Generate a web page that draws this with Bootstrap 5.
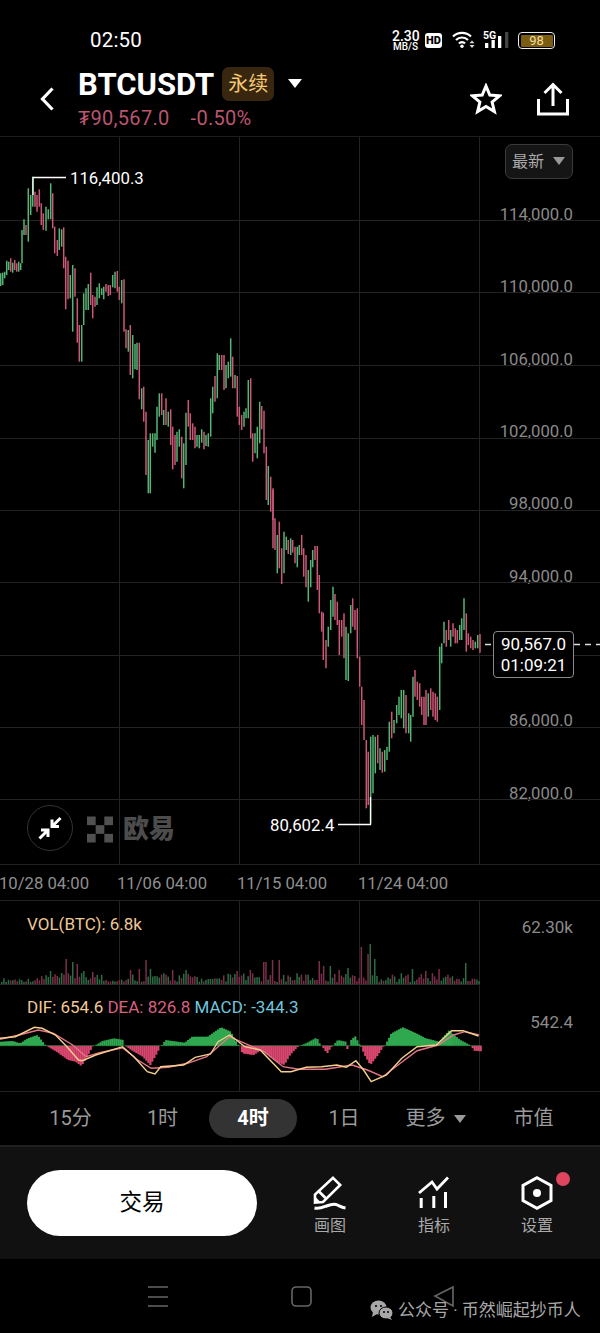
<!doctype html>
<html lang="zh">
<head>
<meta charset="utf-8">
<title>BTCUSDT</title>
<link href="https://cdn.jsdelivr.net/npm/bootstrap@5.3.0/dist/css/bootstrap.min.css" rel="stylesheet">
<style>
html,body{background:#000;margin:0}
body{width:600px;height:1333px;overflow:hidden;font-family:Roboto,"Noto Sans CJK SC",sans-serif;color:#fff}
svg{display:block}
.stbar{height:62px;padding:21px 45px 0 90px}
.st-time{font-size:20.500px;line-height:38px;height:38px;letter-spacing:.2px}
.st-speed{width:27px;margin:9px 6px 0 0;text-align:center;font-size:10px;line-height:9px;font-weight:500;white-space:nowrap}
.st-speed b{font-size:14px;font-weight:500;display:block;line-height:12px}
.st-hd{width:17px;height:15px;background:#fff;color:#000;border-radius:3px;font-size:11px;font-weight:900;line-height:15px;text-align:center;margin:12px 10px 0 0}
.st-wifi{margin-top:9px}
.st-sig{margin:9px 0 0 8px}
.st-batt{width:37px;height:17px;border:1.500px solid #eee;border-radius:4px;padding:1.500px;margin:11px 0 0 9px}
.st-batt span{display:block;height:100%;background:#7a5c12;border-radius:1px;font-size:13px;line-height:11px;color:#f2dc9e;text-align:center}
.hdr{height:75px;border-bottom:1px solid #1c1c1c;padding:0 31px 0 40px}
.hdr-title{margin:0 0 2px 24px}
.ticker{font-size:31px;font-weight:700;line-height:34px;padding-top:1px}
.perp{width:52px;height:34px;margin-left:8px;background:#38270e;color:#f6c878;border-radius:7px;font-size:20px;line-height:34px;text-align:center}
.caret-w{width:0;height:0;border-left:7px solid transparent;border-right:7px solid transparent;border-top:9px solid #fff;margin:12px 0 0 14px}
.subline{font-size:20px;line-height:22px;margin-top:5px;color:#bb5570;letter-spacing:.3px;gap:21px}
.chartbox{position:relative;height:728px;border-bottom:1px solid #222;overflow:hidden}
#csvg,#psvg{position:absolute;left:0;top:0}
.yl{position:absolute;right:27px;font-size:16.700px;line-height:18px;color:#8a8a8a;transform:translateY(-50%)}
.ext{position:absolute;font-size:16.800px;line-height:18px;color:#fff;transform:translateY(-50%)}
.latest{position:absolute;left:505px;top:7px;width:68px;height:35px;background:#151515;border:1px solid #3a3a3a;border-radius:7px;font-size:16px;line-height:33px;color:#aaa;padding-left:6px}
.latest i{position:absolute;left:47px;top:12px;border-left:6px solid transparent;border-right:6px solid transparent;border-top:8px solid #999}
.pricetag{position:absolute;left:493px;top:494px;width:81px;height:47px;background:#000;border:1px solid #8a8a8a;border-radius:4px;font-size:17px;line-height:21px;text-align:center;padding-top:2px}
.collapse-btn{position:absolute;left:27px;top:668px;width:46px;height:46px;border:1px solid #333;border-radius:50%;display:flex;align-items:center;justify-content:center}
.brand{position:absolute;left:87px;top:678px;gap:10px}
.brand span{font-size:26px;font-weight:900;line-height:28px;color:#4c4c4c}
.xaxis{height:36px;border-bottom:1px solid #222;position:relative}
.xl{position:absolute;top:10px;width:120px;text-align:center;font-size:16.700px;line-height:18px;color:#8f8f8f;white-space:nowrap}
.panels{position:relative;height:191px;border-bottom:1px solid #222}
.pl{position:absolute;font-size:17px;line-height:18px;white-space:nowrap;transform:translateY(-50%)}
.tabsbar{height:55px;border-bottom:2px solid #1f1f1f;padding-left:25px;font-size:20px;color:#9a9a9a;align-items:center}
.tabsbar>div{text-align:center;line-height:39px;height:39px}
.tb1{width:91px}
.tb2{width:93px}
.tb-on{width:88px;background:#333;border-radius:20px;color:#fff;font-weight:700}
.tb4{width:94px}
.tb5{width:89px;white-space:nowrap}
.tb6{width:107px}
.tb5 i{display:inline-block;margin-left:8px;vertical-align:2px;border-left:6px solid transparent;border-right:6px solid transparent;border-top:8px solid #999}
.toolbar{height:112px;background:#111;padding-left:27px}
.trade{width:230px;height:66px;margin:23px 21px 0 0;border-radius:33px;background:#fff;color:#000;font-size:22.500px;border:0}
.tool{width:104px;position:relative;font-size:16px;line-height:18px;color:#aaa;text-align:center;padding-top:29px}
.tool svg{margin:0 auto 7px}
.tool-last{margin-left:-1px}
.reddot{position:absolute;left:71px;top:25px;width:14px;height:14px;background:#e0455f;border-radius:50%}
.navbox{height:74px;position:relative}
.wm{position:absolute;left:370px;top:38px;font-size:17px;line-height:26px;color:#a8a8a8;gap:5px;white-space:nowrap}
</style>
</head>
<body>
<div class="stbar d-flex justify-content-between">
  <div class="st-time">02:50</div>
  <div class="d-flex align-items-start">
    <div class="st-speed"><b>2.30</b>MB/S</div>
    <div class="st-hd">HD</div>
    <svg class="st-wifi" width="23" height="18" viewBox="0 0 23 18" fill="none" stroke="#fff" stroke-width="2.200"><path d="M1 6.500a13 13 0 0 1 18 0M4 10a8.500 8.500 0 0 1 12 0M7 13.500a4 4 0 0 1 6 0"/><circle cx="10" cy="16.300" r="1.700" fill="#fff" stroke="none"/><path d="M20 10.500l2.500 2.800h-5zM20 18l2.500-3h-5z" fill="#ddd" stroke="none"/></svg>
    <svg class="st-sig" width="26" height="18" viewBox="0 0 26 18" fill="#fff"><text x="0" y="8.500" font-size="10.500" font-weight="700" font-family="Roboto">5G</text><rect x="2" y="13" width="3.300" height="5"/><rect x="8.500" y="10" width="3.300" height="8"/><rect x="15" y="6" width="3.300" height="12"/><rect x="22" y="2" width="3.300" height="16" fill="#444"/></svg>
    <div class="st-batt"><span>98</span></div>
  </div>
</div>

<div class="hdr d-flex align-items-center">
  <svg width="14" height="24" viewBox="0 0 14 24" fill="none" stroke="#fff" stroke-width="3.200"><path d="M12.500 1.500L2.500 12l10 10.500"/></svg>
  <div class="hdr-title flex-grow-1">
    <div class="d-flex align-items-start">
      <div class="ticker">BTCUSDT</div>
      <div class="perp">永续</div>
      <div class="caret-w"></div>
    </div>
    <div class="subline d-flex"><span>₮90,567.0</span><span>-0.50%</span></div>
  </div>
  <svg width="32" height="32" viewBox="0 0 32 32" fill="none" stroke="#fff" stroke-width="3" stroke-linejoin="miter"><path d="M16 3l3.800 9.100 9.700.700-7.400 6.300 2.300 9.500L16 23.400l-8.400 5.200 2.300-9.500-7.400-6.300 9.700-.700z"/></svg>
  <svg width="32" height="34" viewBox="0 0 32 34" fill="none" stroke="#fff" stroke-width="3" style="margin-left:35px"><path d="M16 24V3M7.500 11L16 2.500 24.500 11M1.500 17v15h29V17"/></svg>
</div>

<div class="chartbox" id="chart">
  <svg id="csvg" width="600" height="728"></svg>
  <div class="latest">最新<i></i></div>
  <div class="ext" style="left:70px;top:41px">116,400.3</div>
  <div class="ext" style="left:270px;top:688px">80,602.4</div>
  <div class="pricetag">90,567.0<br>01:09:21</div>
  <div class="collapse-btn"><svg width="26" height="26" viewBox="0 0 26 26" fill="none" stroke="#fff" stroke-width="3"><path d="M23.500 3L15 11.500M15 4.500V11.500h7M2.500 23.500L11 15M4 15H11v7"/></svg></div>
  <div class="brand d-flex align-items-center">
    <svg width="26" height="27" viewBox="0 0 27 27" fill="#505050"><rect width="9" height="9"/><rect x="18" width="9" height="9"/><rect x="9" y="9" width="9" height="9"/><rect y="18" width="9" height="9"/><rect x="18" y="18" width="9" height="9"/></svg>
    <span>欧易</span>
  </div>
</div>

<div class="xaxis">
  <div class="xl" style="left:-16px">10/28 04:00</div>
  <div class="xl" style="left:102px">11/06 04:00</div>
  <div class="xl" style="left:222px">11/15 04:00</div>
  <div class="xl" style="left:343px">11/24 04:00</div>
</div>

<div class="panels" id="pan">
  <svg id="psvg" width="600" height="191"></svg>
  <div class="pl" style="left:27px;top:23px;color:#f0c896">VOL(BTC): 6.8k</div>
  <div class="pl" style="right:27px;top:26px;color:#8a8a8a">62.30k</div>
  <div class="pl" style="left:27px;top:106px"><span style="color:#f0c896">DIF: 654.6</span> <span style="color:#d9607f">DEA: 826.8</span> <span style="color:#70c6dc">MACD: -344.3</span></div>
  <div class="pl" style="right:27px;top:121px;color:#8a8a8a">542.4</div>
</div>

<div class="tabsbar d-flex">
  <div class="tb1">15分</div>
  <div class="tb2">1时</div>
  <div class="tb-on">4时</div>
  <div class="tb4">1日</div>
  <div class="tb5">更多<i></i></div>
  <div class="tb6">市值</div>
</div>

<div class="toolbar d-flex align-items-start">
  <button class="trade" type="button">交易</button>
  <div class="tool">
    <svg width="34" height="34" viewBox="0 0 34 34" fill="none" stroke="#fff" stroke-width="2.600"><path d="M20 1.800l7.200 7.200L10 26l-8 .5V18.500z"/><path d="M5 14.500l7.500 7.500"/><path d="M2 26.500v-6l6 6z" fill="#fff" stroke="none"/><path d="M1.500 32c5 1 8-.5 12-2s8-2.500 11-1 4 2.500 8 3" stroke-width="3"/></svg>
    画图
  </div>
  <div class="tool">
    <svg width="32" height="34" viewBox="0 0 32 34" fill="none" stroke="#fff" stroke-width="2.800"><path d="M1 17L14 6l5 7L30 1.500"/><path d="M3.200 22v10M15.800 20v12M27.500 16v16" stroke-width="3"/></svg>
    指标
  </div>
  <div class="tool tool-last">
    <svg width="32" height="34" viewBox="0 0 32 34" fill="none" stroke="#fff" stroke-width="3"><path d="M16 1.700L30 9.500v15L16 32.300 2 24.500v-15z"/><circle cx="16" cy="17" r="4" fill="#fff" stroke="none"/></svg>
    设置
    <span class="reddot"></span>
  </div>
</div>

<div class="navbox d-flex">
  <svg width="600" height="74" viewBox="0 0 600 74" fill="none" stroke="#666" stroke-width="1.600"><path d="M148 28h20M148 38h20M148 47h20"/><rect x="292" y="28" width="19" height="19" rx="4"/><path d="M453 28L435 37l18 10z"/></svg>
  <div class="wm d-flex align-items-center">
    <svg width="23" height="20" viewBox="0 0 23 20" fill="#a8a8a8"><ellipse cx="8.500" cy="7.500" rx="8" ry="7"/><path d="M3 12l-1 5 5-3z"/><ellipse cx="16" cy="13" rx="7" ry="6" stroke="#000"/><path d="M20 17l2 3-5-2z"/><circle cx="6" cy="6" r="1.100" fill="#000"/><circle cx="11" cy="6" r="1.100" fill="#000"/><circle cx="14" cy="12" r="1" fill="#000"/><circle cx="18" cy="12" r="1" fill="#000"/></svg>
    <span>公众号 · 币然崛起抄币人</span>
  </div>
</div>

<script src="https://cdn.jsdelivr.net/npm/bootstrap@5.3.0/dist/js/bootstrap.bundle.min.js"></script>
<script>
(function(){
var TOP=137,G='#55b575',R='#cc5878';
var a="2 310 348 g,8 308 345 g,14 305 325 g,20 272 315 g,26 275 300 g,32 265 305 r,38 278 308 g,44 270 300 r,50 280 305 r,56 275 305 g,62 280 300 g,66 180 280 g,72 148 195 g,78 165 195 r,85 55 215 g,92 75 135 g,98 20 110 g,105 65 110 r,111 75 125 r,118 58 110 r,124 100 165 r,130 130 180 r,138 110 182 g,145 118 148 g,152 40 148 g,158 70 175 r,164 170 250 r,172 210 258 r,178 175 240 g,185 178 230 g,191 172 295 r,197 260 418 r,204 272 388 r,211 315 385 g,218 285 485 g,225 295 380 r,232 385 518 r,238 465 575 r,245 465 575 g,251 370 465 g,258 355 420 g,265 342 420 g,272 308 405 r,278 375 445 r,285 380 410 r,291 352 405 g,298 340 385 g,305 355 375 g,311 350 388 g,318 342 365 r,325 345 378 r,331 345 375 r,338 315 352 g,345 305 355 g,352 303 365 r,358 350 390 r,365 330 400 g,372 328 485 r,378 478 535 r,385 480 545 g,391 465 615 r,398 495 625 g,405 522 598 g,411 518 600 g,418 518 688 r,425 655 718 g,431 650 755 r,438 725 915 r,445 810 970 g,451 790 970 g,458 790 830 g,465 790 848 g,471 710 810 g,478 670 740 g,485 670 735 r,491 720 765 g,498 685 765 r,505 725 770 g,512 718 825 r,518 770 898 r,525 795 885 r,531 785 875 g,538 778 830 g,545 800 925 r,551 820 955 g,558 728 885 g,565 690 770 r,571 730 810 r,578 760 810 r,585 770 835 r,591 795 830 g,598 795 835 g,605 778 818 g,612 785 838 r,618 795 828 g,625 790 830 g,632 685 800 g,638 650 730 g,645 618 695 r,652 550 685 g,658 555 600 g,665 555 600 r,672 555 660 r,678 585 655 g,685 575 625 g,692 505 620 g,698 560 655 r,705 615 655 g,712 618 740 r,718 710 765 r,725 735 780 r,732 725 770 g,738 715 745 g,745 630 745 g,752 625 805 r,758 790 875 r,765 790 850 g,772 770 865 g,779 695 820 g,785 708 778 r,792 722 850 r,799 830 990 r,805 888 1005 g,812 920 1025 r,819 955 1050 r".split(',');
var b="69 30 205 r,75 115 210 r,82 165 280 g,88 125 265 r,95 205 312 r,102 155 280 g,109 170 210 g,115 180 222 r,122 175 225 g,128 180 218 r,135 200 250 r,142 200 262 g,148 195 225 g,155 165 225 r,161 205 290 r,168 225 322 r,175 270 365 g,182 240 322 g,188 210 262 g,195 198 240 r,202 198 330 r,208 285 400 r,215 395 455 r,220 398 540 r,228 480 565 r,235 440 500 g,242 360 450 g,249 320 410 g,255 342 420 r,262 365 435 r,268 420 525 r,275 420 470 r,282 400 535 r,288 440 600 g,295 460 603 g,302 375 460 g,308 355 440 r,315 390 450 r,322 385 535 r,329 530 620 r,335 620 735 r,342 660 780 r,349 780 985 r,355 815 975 r,362 770 1030 g,369 765 940 g,376 770 880 g,383 765 850 r,390 805 870 g,397 815 878 r,404 810 875 g,411 800 840 g,418 725 815 g,425 695 775 r,432 720 760 g,440 675 730 g,447 650 705 g,454 630 715 g,461 630 745 g,468 645 760 r,476 700 760 g,482 705 785 g,489 590 710 g,495 570 650 r,502 605 660 r,509 610 680 r,515 650 705 r,522 650 735 r,528 630 735 r,535 640 710 g,542 625 690 r,549 635 710 r,556 640 720 r,562 650 725 r,569 500 690 g,575 490 550 g,582 425 490 g,589 450 500 r,596 420 480 r,602 450 500 g,609 430 470 r,616 445 490 r,622 450 490 r,629 435 480 g,635 415 480 g,642 355 450 g,649 400 515 r,655 460 495 r,662 470 505 r,669 480 510 r,676 485 505 g,683 465 505 g,690 462 518 r".split(',');
var cs=[];
a.forEach(function(s){var p=s.split(' ');cs.push({x:p[0]/3,t:170+p[1]/3,b:170+p[2]/3,c:p[3]});});
b.forEach(function(s){var p=s.split(' ');cs.push({x:250+p[0]/3,t:480+p[1]/3,b:480+p[2]/3,c:p[3]});});
var h='',i;
[220,292,365,438,510,582,655,727,799].forEach(function(y){h+='<path d="M0 '+(y-TOP+.5)+'H600" stroke="#232323"/>';});
[120,240,360,480].forEach(function(x){h+='<path d="M'+(x-.5)+' 0V728" stroke="#232323"/>';});
cs.forEach(function(c){
  h+='<path d="M'+c.x.toFixed(1)+' '+(c.t-TOP).toFixed(1)+'V'+(c.b-TOP).toFixed(1)+'" stroke="'+(c.c=='g'?G:R)+'" stroke-width="1.500"/>';
});
h+='<path d="M33 58V40.500H66" stroke="#fff" stroke-width="1.300" fill="none"/>';
h+='<path d="M338 687.500H370.500V660" stroke="#fff" stroke-width="1.300" fill="none"/>';
h+='<path d="M485 507.500H493M574 507.500H600" stroke="#ddd" stroke-width="1.300" stroke-dasharray="6 5"/>';
document.getElementById('csvg').innerHTML=h;
var yl=[[215,'114,000.0'],[287,'110,000.0'],[360,'106,000.0'],[432,'102,000.0'],[504,'98,000.0'],[577,'94,000.0'],[721,'86,000.0'],[794,'82,000.0']];
var box=document.getElementById('chart');
var frag='';
yl.forEach(function(l){frag+='<div class="yl" style="top:'+(l[0]-TOP)+'px">'+l[1]+'</div>';});
box.insertAdjacentHTML('afterbegin',frag);

var Z=2.613,O=901;
function Y(zy){return 780+zy/3-O;}
function X(zx){return zx/Z;}
function interp(k,x){
  for(var j=1;j<k.length;j++){if(x<=k[j][0]){var d=k[j][0]-k[j-1][0];var t=d?(x-k[j-1][0])/d:0;return k[j-1][1]+t*(k[j][1]-k[j-1][1]);}}
  return k[k.length-1][1];
}
var p='';
[120,240,360,480].forEach(function(x){p+='<path d="M'+(x-.5)+' 0V191" stroke="#232323"/>';});
p+='<path d="M0 83.500H480" stroke="#2a2a2a"/>';
var peaks={172:25,190:22,202:20,132:13,215:13,238:12,382:24,340:14,365:15,392:15,450:14,482:14,620:13,655:14,690:22,712:24,725:24,830:23,842:18,860:18,885:14,905:16,940:37,958:30,968:40,975:25,1075:15,1108:13,1148:15,1213:21};
var pk=Object.keys(peaks).map(function(k){return {x:X(+k),h:peaks[k]};});
function colorAt(x){var best=cs[0];cs.forEach(function(c){if(Math.abs(c.x-x)<Math.abs(best.x-x))best=c;});return best.c;}
for(i=0;i<216;i++){
  var x=1+i*2.22;if(x>481)break;
  var n=Math.abs(Math.sin(i*12.9898)*43758.5453)%1, v=2+n*(i<18||(i>45&&i<58)||(i>88&&i<100)||(i>205)?4:9);
  pk.forEach(function(q){if(Math.abs(q.x-x)<1.15)v=q.h;});
  p+='<rect x="'+x.toFixed(1)+'" y="'+(83-v).toFixed(1)+'" width="1.500" height="'+v.toFixed(1)+'" fill="'+(colorAt(x)=='g'?'#2d6b44':'#7a3048')+'"/>';
}
var env=[[0,785],[30,783],[50,790],[70,775],[95,765],[115,795],[118,797],[145,815],[175,840],[195,845],[210,858],[225,830],[240,797],[245,797],[265,783],[295,775],[320,780],[322,797],[325,797],[340,810],[370,830],[390,855],[410,815],[415,797],[420,797],[430,780],[460,785],[480,788],[500,770],[540,770],[575,742],[600,755],[620,797],[625,797],[630,820],[660,825],[680,810],[700,825],[720,845],[740,855],[755,825],[778,797],[782,797],[800,788],[825,773],[835,797],[838,797],[852,820],[865,797],[868,797],[880,780],[900,785],[903,797],[905,808],[910,797],[915,780],[925,768],[938,797],[940,797],[950,825],[965,855],[985,825],[1000,797],[1003,797],[1020,760],[1050,742],[1085,760],[1110,775],[1145,785],[1170,752],[1200,780],[1228,797],[1230,797],[1235,812],[1258,814]];
var base=Y(797);
for(var zx=0;zx<1258;zx+=5.200){
  var e=Y(interp(env,zx));
  var up=e<base;
  p+='<rect x="'+X(zx).toFixed(1)+'" y="'+Math.min(e,base).toFixed(1)+'" width="2.200" height="'+Math.abs(e-base).toFixed(1)+'" fill="'+(up?'#2fa84f':'#d9466f')+'"/>';
}
p+='<path d="M0 '+base.toFixed(1)+'H481" stroke="#2fa84f" stroke-width=".8" opacity=".6"/>';
function line(k,col){return '<polyline fill="none" stroke="'+col+'" stroke-width="1.400" points="'+k.map(function(q){return X(q[0]).toFixed(1)+','+Y(q[1]).toFixed(1);}).join(' ')+'"/>';}
var dea=[[0,778],[50,765],[100,750],[140,760],[190,795],[225,830],[260,818],[320,803],[360,840],[395,865],[440,862],[490,850],[540,830],[600,770],[640,790],[690,815],[740,860],[780,868],[850,868],[920,855],[960,870],[1000,890],[1040,855],[1090,812],[1145,795],[1185,765],[1215,755],[1252,765]];
var dif=[[0,775],[40,770],[90,742],[110,745],[145,765],[175,800],[205,840],[215,842],[250,825],[320,800],[350,830],[385,875],[405,882],[420,860],[480,855],[510,832],[550,822],[570,785],[600,765],[640,800],[680,810],[735,875],[760,875],[800,862],[840,860],[880,855],[905,862],[930,842],[950,870],[970,905],[1010,885],[1050,835],[1090,800],[1140,795],[1180,752],[1210,752],[1250,768]];
p+=line(dea,'#e5748a')+line(dif,'#f5cf8c');
document.getElementById('psvg').innerHTML=p;
})();
</script>
</body>
</html>
